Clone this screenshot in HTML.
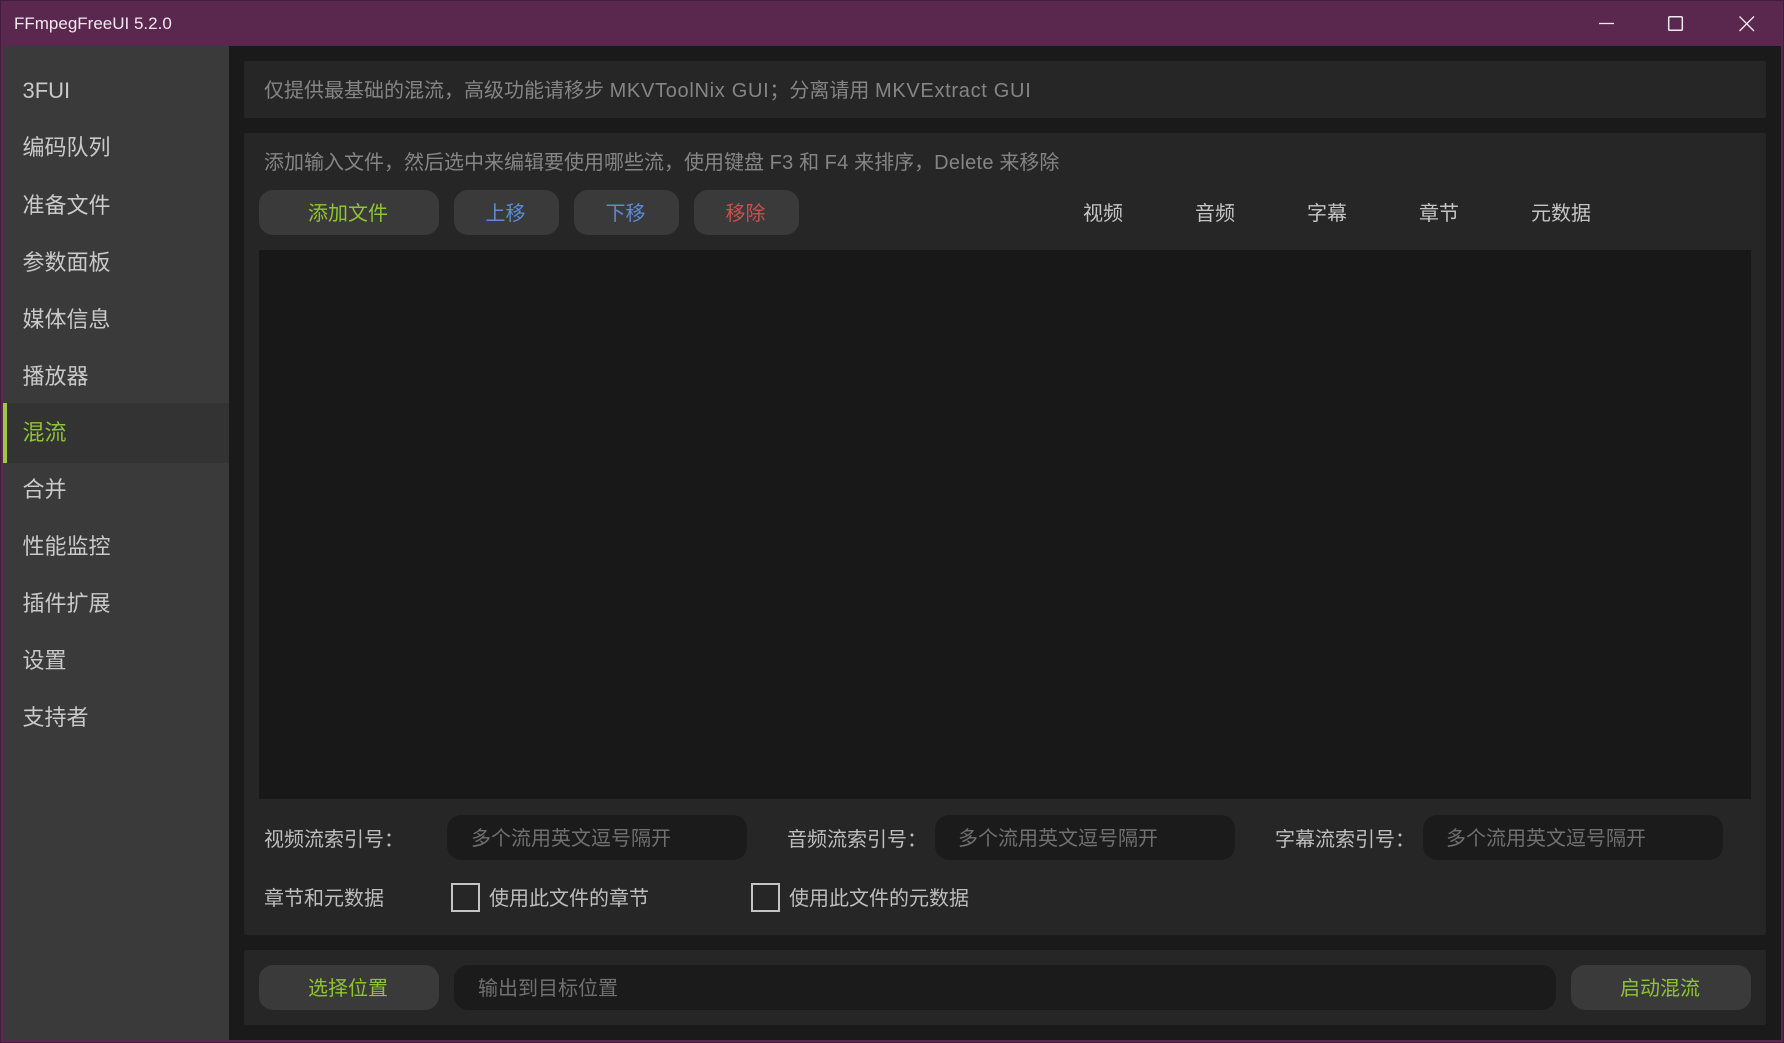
<!DOCTYPE html>
<html lang="zh">
<head>
<meta charset="utf-8">
<title>FFmpegFreeUI 5.2.0</title>
<style>
*{margin:0;padding:0;box-sizing:border-box}
html,body{width:1784px;height:1043px;overflow:hidden;background:#5a284f}
body{position:relative;font-family:"Liberation Sans","Noto Sans CJK SC",sans-serif;font-size:20px}
div{position:absolute;white-space:nowrap}
.t{height:30px;line-height:30px}
.nav{left:22.5px;font-size:22px;color:#c9c9c9;height:32px;line-height:32px}
.panel{background:#262626;left:244px;width:1522px;border-radius:2px}
.btn{background:#3a3a3a;border-radius:14px;height:45px;line-height:49px;text-align:center;padding-right:2px}
.g{color:#8fc431}
.inp{background:#1b1b1b;border-radius:14px;height:45px;line-height:49px;color:#707070}
.lab{color:#bdbdbd}
.hint{color:#858585}
.cb{width:29px;height:29px;border:2px solid #c4c4c4;top:883px}
.tab{color:#c4c4c4;top:199px;text-align:center;width:100px}
.l1{letter-spacing:.7px}
.l2{letter-spacing:.3px}
</style>
</head>
<body>
<div style="left:0;top:0;width:1784px;height:1043px;border:1px solid #431c3e"></div>
<div style="left:14px;top:9px;height:30px;line-height:30px;font-size:17px;color:#f0e8ee">FFmpegFreeUI 5.2.0</div>
<svg style="position:absolute;left:1590px;top:8px" width="180" height="30" viewBox="0 0 180 30" fill="none" stroke="#f2e8f0" stroke-width="1.3">
<path d="M9 15.5H24"/>
<rect x="78.7" y="8.7" width="13.6" height="13.6" rx="1.2" stroke-width="1.5"/>
<path d="M149.5 8.5L164 23M164 8.5L149.5 23"/>
</svg>

<div style="left:3px;top:46px;width:1778px;height:994px;background:#1a1a1a"></div>
<div style="left:3px;top:46px;width:226px;height:994px;background:#3a3a3a"></div>
<div style="left:3px;top:403px;width:226px;height:60px;background:#333"></div>
<div style="left:3px;top:403px;width:4px;height:60px;background:#9dc93a"></div>

<div class="nav" style="top:75px">3FUI</div>
<div class="nav" style="top:132px">编码队列</div>
<div class="nav" style="top:190px">准备文件</div>
<div class="nav" style="top:247px">参数面板</div>
<div class="nav" style="top:304px">媒体信息</div>
<div class="nav" style="top:361px">播放器</div>
<div class="nav" style="top:417px;color:#8fc431">混流</div>
<div class="nav" style="top:474px">合并</div>
<div class="nav" style="top:531px">性能监控</div>
<div class="nav" style="top:588px">插件扩展</div>
<div class="nav" style="top:645px">设置</div>
<div class="nav" style="top:702px">支持者</div>

<div class="panel" style="top:61px;height:57px"></div>
<div class="t hint" style="left:264px;top:76px">仅提供最基础的混流&#65292;高级功能请移步 <span class="l1">MKVToolNix GUI</span>&#65307;分离请用 <span class="l1">MKVExtract GUI</span></div>

<div class="panel" style="top:133px;height:802px"></div>
<div class="t hint" style="left:264px;top:148px">添加输入文件&#65292;然后选中来编辑要使用哪些流&#65292;使用键盘 <span class="l2">F3</span> 和 <span class="l2">F4</span> 来排序&#65292;<span class="l2">Delete</span> 来移除</div>

<div class="btn g" style="left:259px;top:190px;width:180px">添加文件</div>
<div class="btn" style="left:454px;top:190px;width:105px;color:#5b8ad6">上移</div>
<div class="btn" style="left:574px;top:190px;width:105px;color:#5b8ad6">下移</div>
<div class="btn" style="left:694px;top:190px;width:105px;color:#c9504e">移除</div>

<div class="t tab" style="left:1053px">视频</div>
<div class="t tab" style="left:1165px">音频</div>
<div class="t tab" style="left:1277px">字幕</div>
<div class="t tab" style="left:1389px">章节</div>
<div class="t tab" style="left:1511px">元数据</div>

<div style="left:259px;top:250px;width:1492px;height:549px;background:#181818"></div>

<div class="t lab" style="left:264px;top:825px">视频流索引号&#65306;</div>
<div class="inp" style="left:447px;top:815px;width:300px;padding-left:24px">多个流用英文逗号隔开</div>
<div class="t lab" style="left:787px;top:825px">音频流索引号&#65306;</div>
<div class="inp" style="left:935px;top:815px;width:300px;padding-left:23px">多个流用英文逗号隔开</div>
<div class="t lab" style="left:1275px;top:825px">字幕流索引号&#65306;</div>
<div class="inp" style="left:1423px;top:815px;width:300px;padding-left:23px">多个流用英文逗号隔开</div>

<div class="t lab" style="left:264px;top:884px">章节和元数据</div>
<div class="cb" style="left:451px"></div>
<div class="t lab" style="left:489px;top:884px">使用此文件的章节</div>
<div class="cb" style="left:751px"></div>
<div class="t lab" style="left:789px;top:884px">使用此文件的元数据</div>

<div class="panel" style="top:950px;height:75px"></div>
<div class="btn g" style="left:259px;top:965px;width:180px">选择位置</div>
<div class="inp" style="left:454px;top:965px;width:1102px;padding-left:24px">输出到目标位置</div>
<div class="btn g" style="left:1571px;top:965px;width:180px">启动混流</div>
</body>
</html>
